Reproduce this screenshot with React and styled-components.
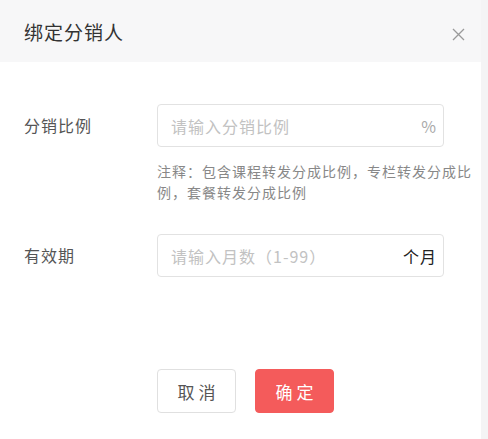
import React from 'react';
import styled, { createGlobalStyle } from 'styled-components';

const GlobalStyle = createGlobalStyle`
  html, body {
    margin: 0;
    padding: 0;
    background: #f4f4f5;
  }
  body {
    font-family: "Noto Sans CJK SC", "Noto Sans", sans-serif;
  }
`;

const Dialog = styled.div`
  width: 481px;
  height: 439px;
  background: #fff;
  display: flex;
  flex-direction: column;
`;

const Header = styled.div`
  height: 62px;
  background: #f7f7f8;
  display: flex;
  align-items: center;
  justify-content: space-between;
  padding: 0 16px 0 24px;
  box-sizing: border-box;
`;

const Title = styled.h2`
  margin: 0;
  font-size: 19px;
  font-weight: 400;
  color: #333;
  letter-spacing: 1px;
  line-height: 1;
`;

const Close = styled.button`
  border: 0;
  background: none;
  padding: 0;
  width: 13px;
  height: 13px;
  margin-top: 7px;
  cursor: pointer;
  color: #9a9a9a;
  display: flex;
`;

const Body = styled.div`
  padding: 42px 38px 0 24px;
  display: flex;
  flex-direction: column;
  flex: 1;
`;

const Row = styled.div`
  display: grid;
  grid-template-columns: 133px 287px;
  align-items: start;
  margin-top: ${({ $top }) => $top || 0}px;
`;

const Label = styled.label`
  font-size: 16px;
  color: #555;
  letter-spacing: 1px;
  line-height: 43px;
`;

const InputBox = styled.div`
  height: 43px;
  box-sizing: border-box;
  border: 1px solid #e2e2e2;
  border-radius: 4px;
  display: flex;
  align-items: center;
  padding: 0 6px 0 13px;
`;

const Field = styled.input`
  flex: 1;
  min-width: 0;
  border: 0;
  outline: none;
  font: inherit;
  font-size: 16px;
  letter-spacing: 1px;
  color: #333;
  padding: 0;
  background: transparent;
  &::placeholder {
    color: #c2c2c2;
  }
`;

const Suffix = styled.span`
  font-size: 16px;
  color: ${({ $dark }) => ($dark ? '#222' : '#aaa')};
  letter-spacing: 1px;
`;

const Note = styled.p`
  grid-column: 2;
  width: 322px;
  margin: 14px 0 0;
  font-size: 14px;
  line-height: 21px;
  letter-spacing: 1px;
  color: #888;
`;

const Actions = styled.div`
  margin-top: auto;
  margin-bottom: 26px;
  padding-left: 133px;
  display: flex;
  gap: 19px;
`;

const Button = styled.button`
  width: 79px;
  height: 44px;
  border-radius: 4px;
  font-family: inherit;
  font-size: 17px;
  letter-spacing: 4px;
  text-indent: 4px;
  cursor: pointer;
  border: 1px solid ${({ $primary }) => ($primary ? '#f45b5b' : '#e0e0e0')};
  background: ${({ $primary }) => ($primary ? '#f45b5b' : '#fff')};
  color: ${({ $primary }) => ($primary ? '#fff' : '#555')};
`;

const CloseIcon = () => (
  <svg width="13" height="13" viewBox="0 0 13 13">
    <path d="M1 1L12 12M12 1L1 12" stroke="currentColor" strokeWidth="1.3" />
  </svg>
);

export default function App() {
  return (
    <>
      <GlobalStyle />
      <Dialog>
        <Header>
          <Title>绑定分销人</Title>
          <Close aria-label="关闭">
            <CloseIcon />
          </Close>
        </Header>
        <Body>
          <Row>
            <Label>分销比例</Label>
            <InputBox>
              <Field placeholder="请输入分销比例" />
              <Suffix>%</Suffix>
            </InputBox>
            <Note>注释：包含课程转发分成比例，专栏转发分成比例，套餐转发分成比例</Note>
          </Row>
          <Row $top={31}>
            <Label>有效期</Label>
            <InputBox>
              <Field placeholder="请输入月数（1-99）" />
              <Suffix $dark>个月</Suffix>
            </InputBox>
          </Row>
          <Actions>
            <Button>取消</Button>
            <Button $primary>确定</Button>
          </Actions>
        </Body>
      </Dialog>
    </>
  );
}
